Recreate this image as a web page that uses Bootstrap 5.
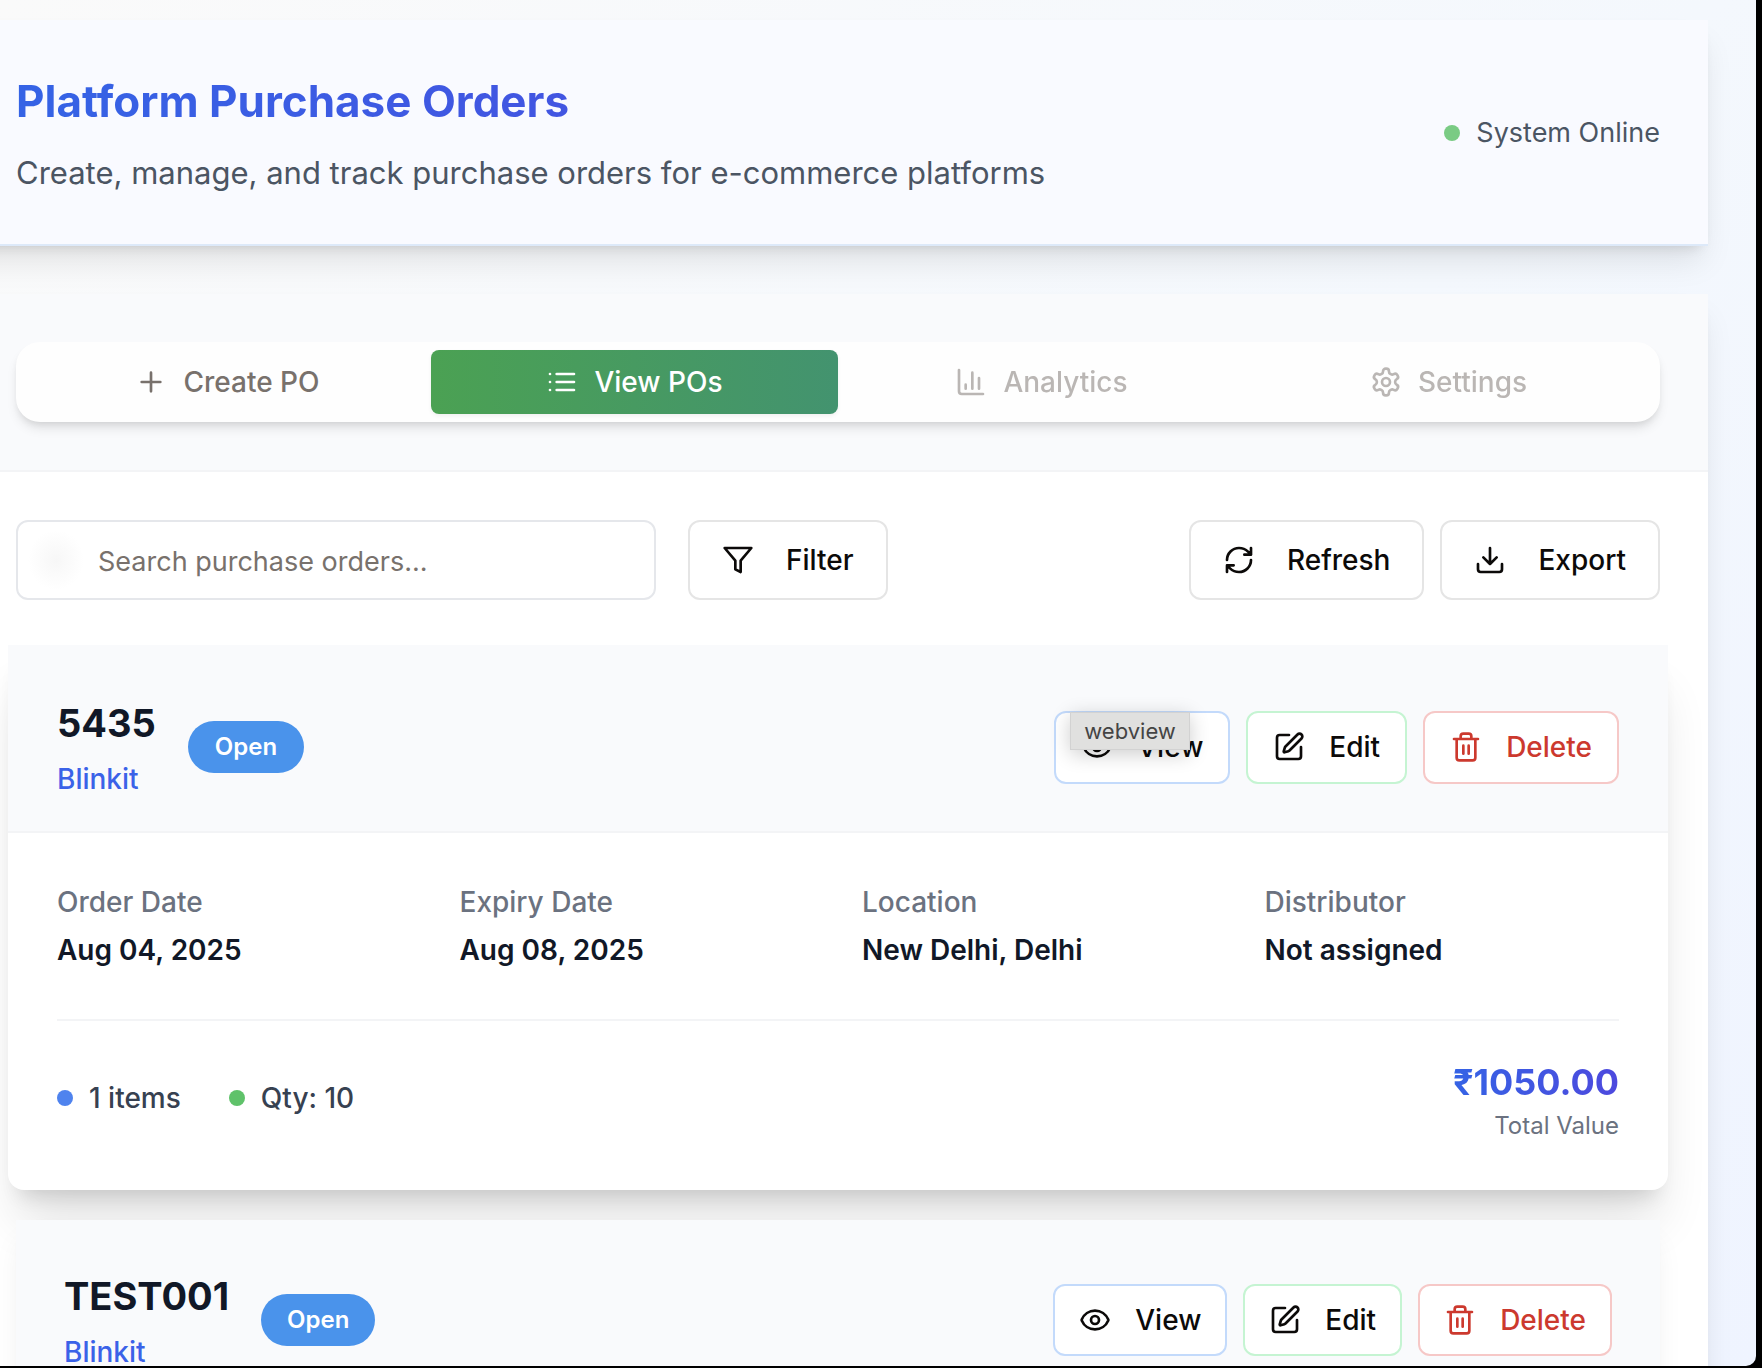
<!DOCTYPE html>
<html lang="en">
<head>
<meta charset="utf-8">
<meta name="viewport" content="width=device-width, initial-scale=1">
<title>Platform Purchase Orders</title>
<link href="https://cdn.jsdelivr.net/npm/bootstrap@5.3.0/dist/css/bootstrap.min.css" rel="stylesheet">
<style>
  html { background: #000; }
  body { font-family: Inter, "Liberation Sans", sans-serif; font-size: 28px; line-height: 40px; color: #111827; background: #000; height: 100vh; overflow: hidden; }
  svg { width: 32px; height: 32px; flex: none; fill: none; stroke: currentColor; stroke-width: 2; stroke-linecap: round; stroke-linejoin: round; }
  .app-window { height: calc(100vh - 2px); margin-right: 6px; padding: 20px 48px 0 0; overflow: hidden; border-bottom-right-radius: 10px; background: linear-gradient(135deg, #fafafa 0%, #f4f8fd 55%, #eff4ff 100%); }
  .page-head, .panel { margin-left: -64px; }
  .page-head { padding: 49px 48px 47px 80px; background: #f9faff; border-bottom: 2px solid #dde9f9; box-shadow: 0 20px 30px -6px rgba(0,0,0,.1), 0 8px 12px -8px rgba(0,0,0,.14); }
  .grad-text { background: linear-gradient(90deg, #3563e5, #4d49de); -webkit-background-clip: text; background-clip: text; color: transparent; }
  .page-title { font-size: 44px; line-height: 64px; font-weight: 700; }
  .page-sub { font-size: 31px; line-height: 48px; color: #4b5563; }
  .status-text { font-size: 27px; color: #4b5563; }
  .dot { width: 16px; height: 16px; border-radius: 50%; flex: none; }
  .dot-online { background: #7acb84; }
  .dot-blue { background: #4f83ee; }
  .dot-green { background: #5fc26a; }
  .panel { margin-top: 48px; background: #fff; box-shadow: 0 20px 30px -6px rgba(0,0,0,.1), 0 8px 12px -8px rgba(0,0,0,.1); }
  .tab-strip { padding: 48px 48px 48px 80px; background: #f9fafc; border-bottom: 2px solid #f3f4f6; }
  .tab-list { padding: 8px; border-radius: 24px; background: #fefefe; box-shadow: 0 8px 12px -2px rgba(0,0,0,.1), 0 4px 8px -4px rgba(0,0,0,.12); }
  .tab-list .nav-link { display: flex; align-items: center; justify-content: center; gap: 16px; height: 64px; padding: 0 24px; border-radius: 8px; font-weight: 500; color: #78716c; }
  .tab-list .nav-link.active { color: #fff; background: linear-gradient(90deg, #4ba153, #43936f); box-shadow: 0 2px 4px rgba(0,0,0,.06); }
  .tab-list .nav-link.disabled { opacity: .5; }
  .panel-body { padding: 48px 48px 48px 80px; }
  .tool-group { gap: 32px; }
  .search-box { width: 640px; position: relative; }
  .search-glow { position: absolute; left: 12px; top: 10px; width: 56px; height: 60px; border-radius: 50%; background: radial-gradient(closest-side, #f7f7f7, #fff); pointer-events: none; }
  .search-box .form-control { height: 80px; padding: 2px 24px 0 80px; font-size: 27px; border: 2px solid #e5e7eb; border-radius: 12px; }
  .search-box .form-control::placeholder { color: #78716c; }
  .tool-btn, .act-btn { display: inline-flex; align-items: center; font-size: 28px; line-height: 40px; font-weight: 500; color: #0c0a09; background: #fff; border: 2px solid #e5e5e5; border-radius: 12px; }
  .tool-btn { height: 80px; padding: 0 32px; gap: 32px; }
  .act-btn { height: 72px; padding: 0 24px; gap: 24px; }
  .act-view { border-color: #c3dafb; }
  .act-edit { border-color: #c5f4d2; }
  .act-delete { border-color: #f6c8c7; color: #cc392e; }
  .po-card { margin-top: 30px; border-radius: 16px; background: #fff; position: relative; box-shadow: 0 16px 30px -6px rgba(0,0,0,.08), 0 8px 12px -8px rgba(0,0,0,.08); }
  .po-head { padding: 48px 48px 32px; background: #f9fafc; border-bottom: 2px solid #f3f4f6; }
  .po-title { gap: 32px; }
  .po-number { font-size: 38px; line-height: 56px; font-weight: 700; }
  .po-platform { color: #3b62e8; font-weight: 500; text-decoration: none; }
  .po-state { font-size: 24px; line-height: 32px; font-weight: 600; padding: 10px 26px; background: #4a93eb; }
  .po-body { padding: 49px 49px 48px; }
  .po-facts { --bs-gutter-x: 48px; }
  .po-facts dt { font-weight: 500; color: #6b7280; margin-bottom: 8px; }
  .po-facts dd { font-weight: 600; margin: 0; }
  .po-foot { margin-top: 49px; padding-top: 33px; border-top: 2px solid #f3f4f6; color: #374151; font-weight: 500; }
  .po-total { font-size: 36px; line-height: 56px; font-weight: 700; }
  .po-total-label { font-size: 24px; line-height: 32px; font-weight: 400; color: #6b7280; }
  .po-card.raised { margin: 45px -8px 0; box-shadow: 0 40px 50px -10px rgba(0,0,0,.12), 0 16px 20px -12px rgba(0,0,0,.14); }
  .raised .po-head { padding: 50px 49px 32px; }
  .raised .act-btn { height: 73px; padding: 0 25px; }
  .raised .po-state { padding: 10px 27px; }
  .hover-tip { position: absolute; left: 16px; top: 1px; padding: 1px 13px; font-size: 22px; line-height: 34px; font-weight: 400; color: #444; background: #e0e0df; border: 1px solid #d2d2d2; box-shadow: 0 4px 20px rgba(0,0,0,.2); z-index: 2; }
</style>
</head>
<body>
<svg class="d-none" xmlns="http://www.w3.org/2000/svg">
  <symbol id="i-eye" viewBox="0 0 24 24"><path d="M2.06 12.35a1 1 0 0 1 0-.7 10.75 10.75 0 0 1 19.88 0 1 1 0 0 1 0 .7 10.75 10.75 0 0 1-19.88 0"/><circle cx="12" cy="12" r="3"/></symbol>
  <symbol id="i-edit" viewBox="0 0 24 24"><path d="M12 3H5a2 2 0 0 0-2 2v14a2 2 0 0 0 2 2h14a2 2 0 0 0 2-2v-7"/><path d="M18.38 2.62a1 1 0 0 1 3 3l-9.01 9.02a2 2 0 0 1-.85.5l-2.87.84a.5.5 0 0 1-.62-.62l.84-2.87a2 2 0 0 1 .5-.85z"/></symbol>
  <symbol id="i-trash" viewBox="0 0 24 24"><path d="M3 6h18M19 6v14a2 2 0 0 1-2 2H7a2 2 0 0 1-2-2V6M8 6V4a2 2 0 0 1 2-2h4a2 2 0 0 1 2 2v2M10 11v6M14 11v6"/></symbol>
</svg>
<div class="app-window">
  <header class="page-head d-flex justify-content-between align-items-center">
    <div>
      <h1 class="page-title grad-text mb-3">Platform Purchase Orders</h1>
      <p class="page-sub mb-0">Create, manage, and track purchase orders for e-commerce platforms</p>
    </div>
    <div class="status-text d-flex align-items-center gap-3"><span class="dot dot-online"></span>System Online</div>
  </header>

  <main class="panel">
    <div class="tab-strip">
      <nav class="tab-list nav nav-fill row row-cols-4 gx-0 m-0">
        <a class="nav-link col" href="#create"><svg viewBox="0 0 24 24"><path d="M5 12h14M12 5v14"/></svg>Create PO</a>
        <a class="nav-link col active" href="#view"><svg viewBox="0 0 24 24"><path d="M3 12h.01M3 18h.01M3 6h.01M8 12h13M8 18h13M8 6h13"/></svg>View POs</a>
        <a class="nav-link col disabled" href="#analytics" aria-disabled="true"><svg viewBox="0 0 24 24"><path d="M3 3v16a2 2 0 0 0 2 2h16M18 17V9M13 17V5M8 17v-3"/></svg>Analytics</a>
        <a class="nav-link col disabled" href="#settings" aria-disabled="true"><svg viewBox="0 0 24 24"><path d="M12.22 2h-.44a2 2 0 0 0-2 2v.18a2 2 0 0 1-1 1.73l-.43.25a2 2 0 0 1-2 0l-.15-.08a2 2 0 0 0-2.73.73l-.22.38a2 2 0 0 0 .73 2.73l.15.1a2 2 0 0 1 1 1.72v.51a2 2 0 0 1-1 1.74l-.15.09a2 2 0 0 0-.73 2.73l.22.38a2 2 0 0 0 2.73.73l.15-.08a2 2 0 0 1 2 0l.43.25a2 2 0 0 1 1 1.73V20a2 2 0 0 0 2 2h.44a2 2 0 0 0 2-2v-.18a2 2 0 0 1 1-1.73l.43-.25a2 2 0 0 1 2 0l.15.08a2 2 0 0 0 2.73-.73l.22-.39a2 2 0 0 0-.73-2.73l-.15-.08a2 2 0 0 1-1-1.74v-.5a2 2 0 0 1 1-1.74l.15-.09a2 2 0 0 0 .73-2.73l-.22-.38a2 2 0 0 0-2.73-.73l-.15.08a2 2 0 0 1-2 0l-.43-.25a2 2 0 0 1-1-1.73V4a2 2 0 0 0-2-2z"/><circle cx="12" cy="12" r="3"/></svg>Settings</a>
      </nav>
    </div>

    <div class="panel-body">
      <div class="d-flex justify-content-between">
        <div class="tool-group d-flex">
          <div class="search-box">
            <input class="form-control shadow-none" type="search" placeholder="Search purchase orders..." aria-label="Search purchase orders">
            <span class="search-glow"></span>
          </div>
          <button class="btn tool-btn" type="button"><svg viewBox="0 0 24 24"><path d="M22 3H2l8 9.46V19l4 2v-8.54z"/></svg>Filter</button>
        </div>
        <div class="d-flex gap-3">
          <button class="btn tool-btn" type="button"><svg viewBox="0 0 24 24"><path d="M3 12a9 9 0 0 1 9-9 9.75 9.75 0 0 1 6.74 2.74L21 8M21 3v5h-5M21 12a9 9 0 0 1-9 9 9.75 9.75 0 0 1-6.74-2.74L3 16M8 16H3v5"/></svg>Refresh</button>
          <button class="btn tool-btn" type="button"><svg viewBox="0 0 24 24"><path d="M21 15v4a2 2 0 0 1-2 2H5a2 2 0 0 1-2-2v-4M7 10l5 5 5-5M12 15V3"/></svg>Export</button>
        </div>
      </div>

      <article class="po-card raised">
        <div class="po-head d-flex justify-content-between align-items-center">
          <div class="po-title d-flex align-items-center">
            <div>
              <h2 class="po-number mb-2">5435</h2>
              <a class="po-platform d-block" href="#blinkit">Blinkit</a>
            </div>
            <span class="badge rounded-pill po-state">Open</span>
          </div>
          <div class="d-flex gap-3">
            <div class="position-relative">
              <button class="btn act-btn act-view" type="button"><svg><use href="#i-eye"/></svg>View</button>
              <span class="hover-tip" role="tooltip">webview</span>
            </div>
            <button class="btn act-btn act-edit" type="button"><svg><use href="#i-edit"/></svg>Edit</button>
            <button class="btn act-btn act-delete" type="button"><svg><use href="#i-trash"/></svg>Delete</button>
          </div>
        </div>
        <div class="po-body">
          <dl class="row po-facts mb-0">
            <div class="col-3"><dt>Order Date</dt><dd>Aug 04, 2025</dd></div>
            <div class="col-3"><dt>Expiry Date</dt><dd>Aug 08, 2025</dd></div>
            <div class="col-3"><dt>Location</dt><dd>New Delhi, Delhi</dd></div>
            <div class="col-3"><dt>Distributor</dt><dd>Not assigned</dd></div>
          </dl>
          <div class="po-foot d-flex justify-content-between align-items-center">
            <div class="d-flex gap-5">
              <div class="d-flex align-items-center gap-3"><span class="dot dot-blue"></span>1 items</div>
              <div class="d-flex align-items-center gap-3"><span class="dot dot-green"></span>Qty: 10</div>
            </div>
            <div class="text-end">
              <div class="po-total grad-text">₹1050.00</div>
              <div class="po-total-label">Total Value</div>
            </div>
          </div>
        </div>
      </article>

      <article class="po-card">
        <div class="po-head d-flex justify-content-between align-items-center">
          <div class="po-title d-flex align-items-center">
            <div>
              <h2 class="po-number mb-2">TEST001</h2>
              <a class="po-platform d-block" href="#blinkit">Blinkit</a>
            </div>
            <span class="badge rounded-pill po-state">Open</span>
          </div>
          <div class="d-flex gap-3">
            <button class="btn act-btn act-view" type="button"><svg><use href="#i-eye"/></svg>View</button>
            <button class="btn act-btn act-edit" type="button"><svg><use href="#i-edit"/></svg>Edit</button>
            <button class="btn act-btn act-delete" type="button"><svg><use href="#i-trash"/></svg>Delete</button>
          </div>
        </div>
      </article>
    </div>
  </main>
</div>
<script src="https://cdn.jsdelivr.net/npm/bootstrap@5.3.0/dist/js/bootstrap.bundle.min.js"></script>
</body>
</html>
